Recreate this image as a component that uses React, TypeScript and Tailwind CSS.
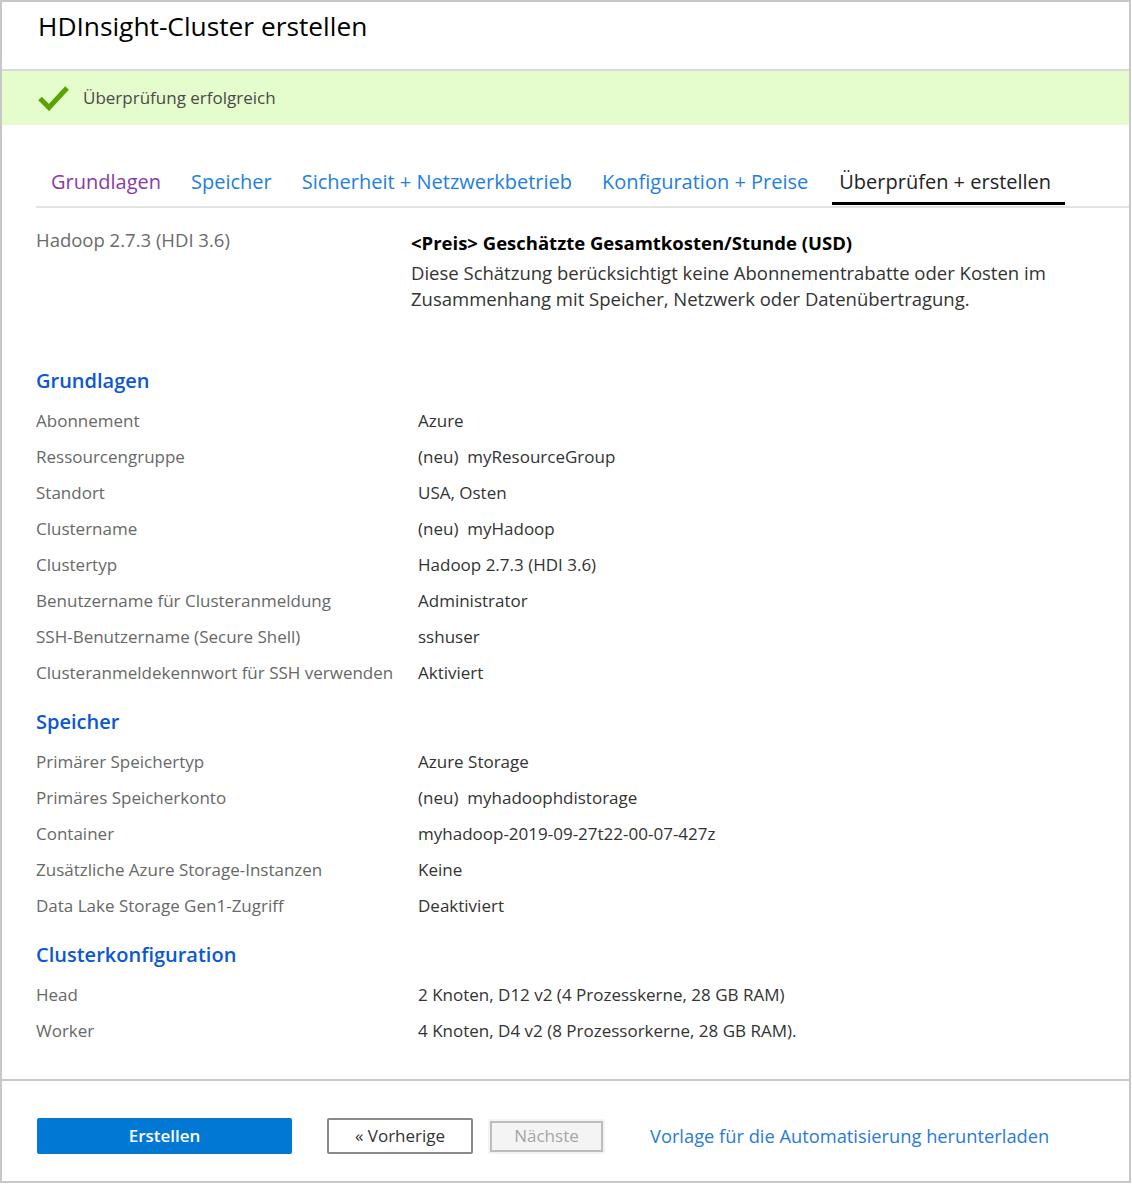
import React from "react";

interface Row {
  label: string;
  value: string;
}

interface Section {
  title: string;
  rows: Row[];
}

const sections: Section[] = [
  {
    title: "Grundlagen",
    rows: [
      { label: "Abonnement", value: "Azure" },
      { label: "Ressourcengruppe", value: "(neu)\u00a0 myResourceGroup" },
      { label: "Standort", value: "USA, Osten" },
      { label: "Clustername", value: "(neu)\u00a0 myHadoop" },
      { label: "Clustertyp", value: "Hadoop 2.7.3 (HDI 3.6)" },
      { label: "Benutzername für Clusteranmeldung", value: "Administrator" },
      { label: "SSH-Benutzername (Secure Shell)", value: "sshuser" },
      { label: "Clusteranmeldekennwort für SSH verwenden", value: "Aktiviert" },
    ],
  },
  {
    title: "Speicher",
    rows: [
      { label: "Primärer Speichertyp", value: "Azure Storage" },
      { label: "Primäres Speicherkonto", value: "(neu)\u00a0 myhadoophdistorage" },
      { label: "Container", value: "myhadoop-2019-09-27t22-00-07-427z" },
      { label: "Zusätzliche Azure Storage-Instanzen", value: "Keine" },
      { label: "Data Lake Storage Gen1-Zugriff", value: "Deaktiviert" },
    ],
  },
  {
    title: "Clusterkonfiguration",
    rows: [
      { label: "Head", value: "2 Knoten, D12 v2 (4 Prozesskerne, 28 GB RAM)" },
      { label: "Worker", value: "4 Knoten, D4 v2 (8 Prozessorkerne, 28 GB RAM)." },
    ],
  },
];

const tabs = [
  { name: "Grundlagen", className: "text-[#8b3aa8] border-transparent" },
  { name: "Speicher", className: "text-[#1e80dc] border-transparent" },
  { name: "Sicherheit + Netzwerkbetrieb", className: "text-[#1e80dc] border-transparent" },
  { name: "Konfiguration + Preise", className: "text-[#1e80dc] border-transparent" },
];

const CheckIcon = () => (
  <svg width="32" height="26" viewBox="0 0 32 26" fill="none">
    <path d="M3 13.5 L12 22.5 L30 3" stroke="#5ba300" strokeWidth="5" />
  </svg>
);

const App: React.FC = () => {
  return (
    <div className="w-[1131px] border-2 border-[#c8c8c8] bg-white font-['Open_Sans','Noto_Sans',sans-serif] flex flex-col">
      {/* Header ------------------------------------------------ */}
      <div className="h-[67px] px-[36px] pt-[6px]">
        <h1 className="text-[26.3px] leading-[36px] text-black">
          HDInsight-Cluster erstellen
        </h1>
      </div>

      {/* Validation banner */}
      <div className="h-[56px] border-t-2 border-[#dadada] bg-[#e5fccc] flex items-center px-[35px] gap-[14px]">
        <CheckIcon />
        <span className="text-[17px] text-[#4a4a4a]">Überprüfung erfolgreich</span>
      </div>

      {/* Tabs */}
      <div className="mt-[37px] ml-[34px] flex pb-[1px] border-b-2 border-[#e3e3e3]">
        {tabs.map((tab) => (
          <div
            key={tab.name}
            className={`h-[43px] px-[15px] flex items-center text-[20px] border-b-[3px] ${tab.className}`}
          >
            {tab.name}
          </div>
        ))}
        <div className="h-[43px] ml-[9px] pl-[7px] pr-[14px] flex items-center text-[20px] text-[#222] border-b-[3px] border-black">
          Überprüfen + erstellen
        </div>
      </div>

      {/* Summary */}
      <div className="px-[34px] mt-[19px] flex">
        <div className="w-[375px] text-[18.5px] leading-[26px] text-[#6b6b6b]">
          Hadoop 2.7.3 (HDI 3.6)
        </div>
        <div className="flex flex-col">
          <p className="text-[18.5px] leading-[26px] font-bold text-black mt-[3px]">
            &lt;Preis&gt; Geschätzte Gesamtkosten/Stunde (USD)
          </p>
          <p className="text-[18.5px] leading-[26px] text-[#333] mt-[4px]">
            Diese Schätzung berücksichtigt keine Abonnementrabatte oder Kosten im
            <br />
            Zusammenhang mit Speicher, Netzwerk oder Datenübertragung.
          </p>
        </div>
      </div>

      {/* Sections */}
      <div className="px-[34px] mt-[55px] flex flex-col gap-[17px]">
        {sections.map((section) => (
          <div key={section.title} className="flex flex-col">
            <h2 className="text-[20px] leading-[28px] font-semibold text-[#0b58d2]">
              {section.title}
            </h2>
            <div className="mt-[8px] flex flex-col">
              {section.rows.map((row) => (
                <div
                  key={row.label}
                  className="grid grid-cols-[382px_1fr] h-[36px] items-center text-[17px]"
                >
                  <span className="text-[#686868]">{row.label}</span>
                  <span className="text-[#333]">{row.value}</span>
                </div>
              ))}
            </div>
          </div>
        ))}
      </div>

      {/* Footer */}
      <div className="mt-[30px] border-t-2 border-[#c8c8c8] pt-[37px] pb-[27px] px-[35px] flex items-center">
        <button className="w-[255px] h-[36px] rounded-[2px] bg-[#0078d4] text-white text-[17px] font-semibold">
          Erstellen
        </button>
        <button className="ml-[35px] w-[146px] h-[36px] border-2 border-[#8a8a8a] rounded-[2px] text-[17px] text-[#333]">
          « Vorherige
        </button>
        <div className="ml-[15px] p-[2px] bg-[#f3f3f3] rounded-[2px]">
          <button className="w-[113px] h-[31px] border-2 border-[#bdbdbd] bg-[#f4f4f4] text-[17px] text-[#a6a6a6]">
            Nächste
          </button>
        </div>
        <a className="ml-[45px] text-[18.3px] text-[#2a7ad8]">
          Vorlage für die Automatisierung herunterladen
        </a>
      </div>
    </div>
  );
};

export default App;
